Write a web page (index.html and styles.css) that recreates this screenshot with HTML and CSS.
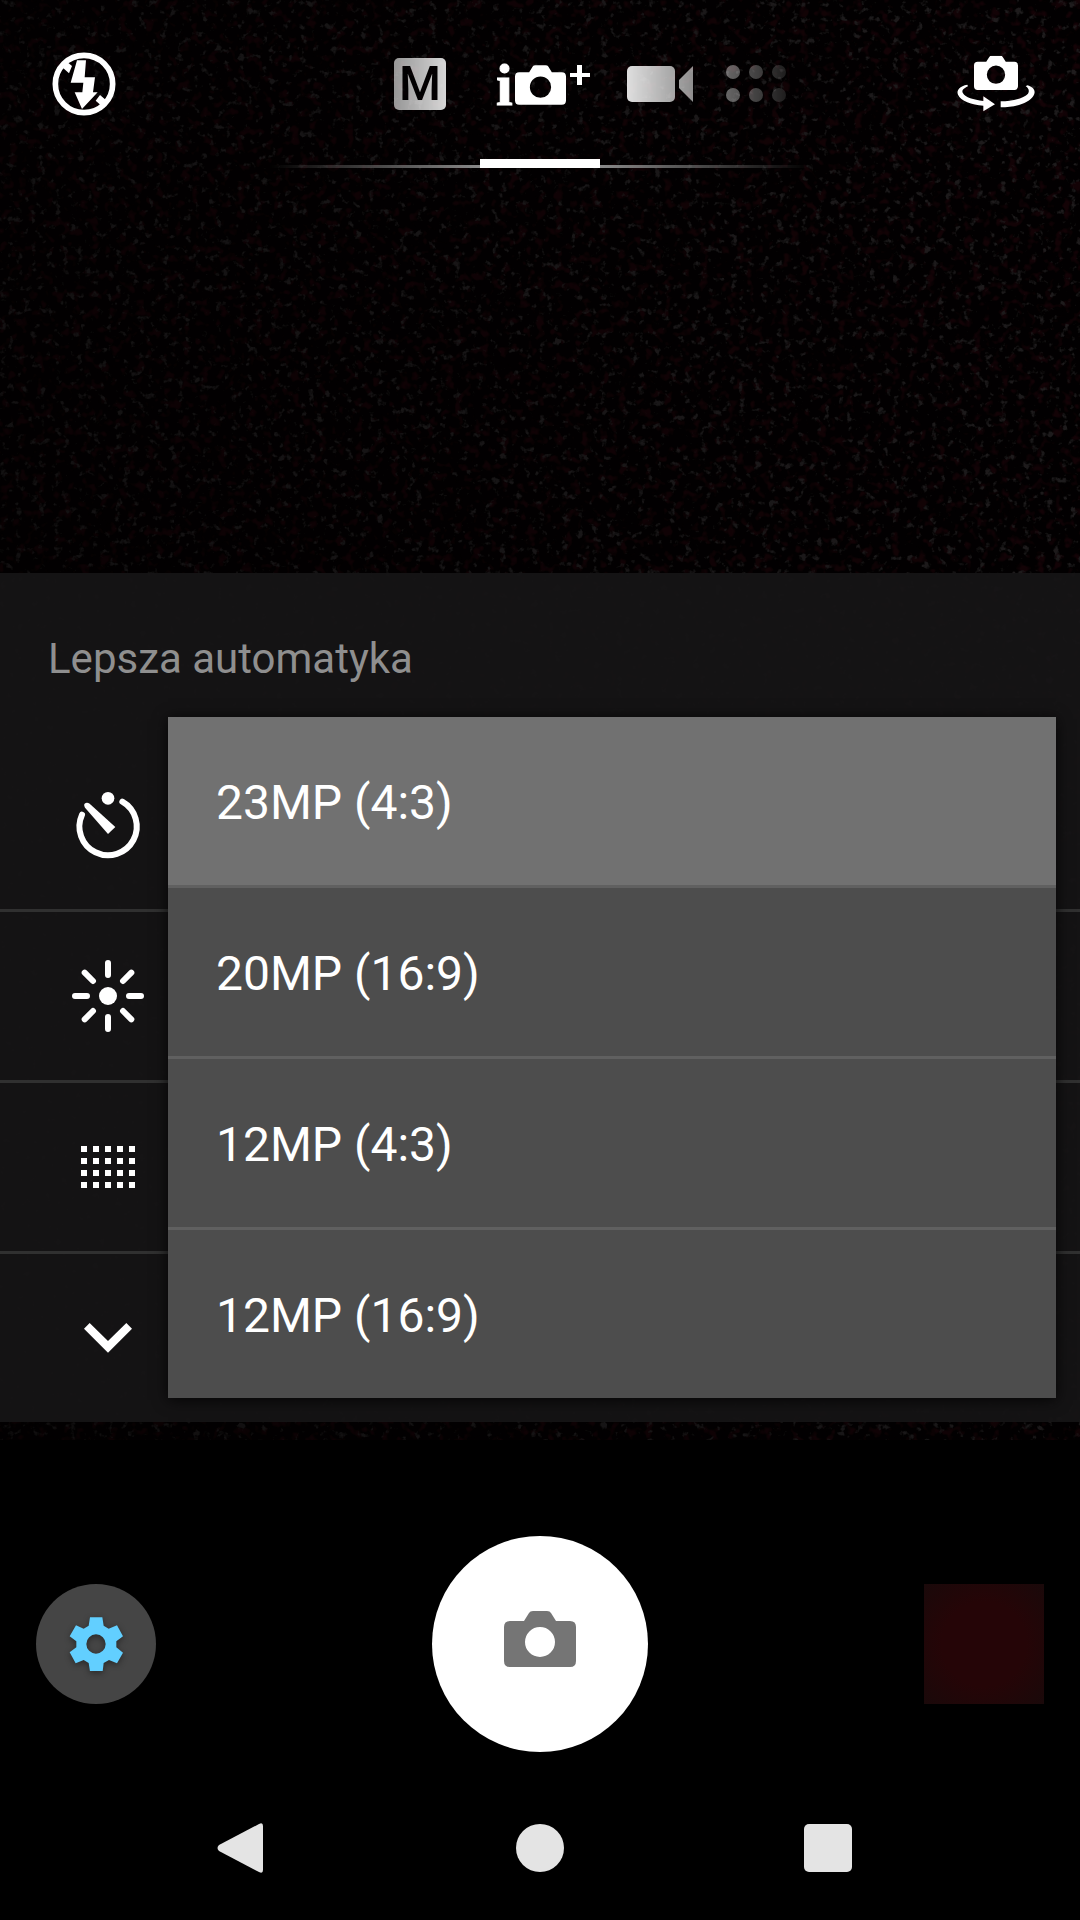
FILE: index.html
```html
<!DOCTYPE html>
<html lang="pl">
<head>
<meta charset="utf-8">
<meta name="viewport" content="width=device-width, initial-scale=1">
<title>Aparat</title>
<link rel="stylesheet" href="styles.css">
</head>
<body>
<svg class="defs" aria-hidden="true">
	<symbol id="camera" viewBox="0 0 72 56">
		<path fill-rule="evenodd" d="M6 10H20L25 2Q26 0 29 0H43Q46 0 47 2L52 10H66Q72 10 72 16V50Q72 56 66 56H6Q0 56 0 50V16Q0 10 6 10ZM36 16A15 15 0 1 0 36 46A15 15 0 1 0 36 16Z"/>
	</symbol>
</svg>

<main class="viewfinder">
	<!-- sensor grain -->
	<svg class="grain" aria-hidden="true">
		<filter id="grain" x="0" y="0" width="100%" height="100%" color-interpolation-filters="sRGB">
			<feTurbulence type="fractalNoise" baseFrequency="0.13" numOctaves="3" seed="8"/>
			<feColorMatrix values="0 0 0 0 0.12  0 0 0 0 0.11  0 0 0 0 0.115  6 0 0 0 -3.7"/>
		</filter>
		<filter id="grain-red" x="0" y="0" width="100%" height="100%" color-interpolation-filters="sRGB">
			<feTurbulence type="fractalNoise" baseFrequency="0.11" numOctaves="2" seed="21"/>
			<feColorMatrix values="0 0 0 0 0.08  0 0 0 0 0.01  0 0 0 0 0.025  0 5 0 0 -2.7"/>
		</filter>
		<rect width="100%" height="100%" filter="url(#grain-red)"/>
		<rect width="100%" height="100%" filter="url(#grain)"/>
	</svg>

	<header class="topbar">
		<button class="icon-btn" type="button" aria-label="Lampa wyłączona">
			<svg class="icon" viewBox="54 54 216 216">
				<circle cx="162" cy="162" r="86" fill="none" stroke="currentColor" stroke-width="17"/>
				<path d="M141 91H168L164 142H195L189 187H203L156 237L134 187H157L160 158H122Z"/>
				<path d="M90 106L104 90L126 108L117 130ZM210 195L232 214L222 234L197 212Z"/>
			</svg>
		</button>

		<nav class="modes">
			<button class="mode" type="button" aria-label="Tryb ręczny"><span class="badge">M</span></button>
			<button class="mode active" type="button" aria-label="Lepsza automatyka">
				<svg class="mode-icon" viewBox="0 0 120 72">
					<text class="serif" x="16" y="57">i</text>
					<use href="#camera" x="35" y="17" width="51" height="40"/>
					<path d="M97 17H102V25H110V29H102V37H97V29H90V25H97Z"/>
				</svg>
			</button>
			<button class="mode" type="button" aria-label="Wideo">
				<svg class="mode-icon" viewBox="0 0 120 72">
					<rect x="27" y="18" width="48" height="36" rx="5"/>
					<path d="M79 32L93 18V54L79 40Z"/>
				</svg>
			</button>
			<button class="mode" type="button" aria-label="Więcej trybów">
				<svg class="mode-icon" viewBox="0 0 120 72">
					<circle cx="13" cy="24" r="7"/><circle cx="36" cy="24" r="7"/><circle cx="59" cy="24" r="7"/>
					<circle cx="13" cy="47" r="7"/><circle cx="36" cy="47" r="7"/><circle cx="59" cy="47" r="7"/>
				</svg>
			</button>
		</nav>

		<button class="icon-btn" type="button" aria-label="Przełącz aparat">
			<svg class="icon wide" viewBox="42 24 252 216">
				<use href="#camera" x="102" y="47" width="132" height="103"/>
				<path d="M82 134C60 138 48 150 54 164C62 184 95 193 130 197V214L165 193L130 169V183C100 180 76 172 69 160C64 151 70 146 84 139Z"/>
				<path d="M182 184C215 184 252 175 264 161C270 151 264 143 257 139L262 136C282 141 289 155 280 168C268 189 225 202 182 202Z"/>
			</svg>
		</button>
	</header>

	<section class="panel">
		<h1 class="panel-title">Lepsza automatyka</h1>
		<ul class="settings">
			<li>
				<button class="setting" type="button" aria-label="Samowyzwalacz">
					<svg class="icon" viewBox="66 57 216 216">
						<path d="M217 95A86 86 0 1 1 96 134" fill="none" stroke="currentColor" stroke-width="18" stroke-linecap="round"/>
						<circle cx="174" cy="85" r="19"/>
						<path d="M105 113Q99 103 107 99Q113 97 119 101L196 171L174 192Z"/>
					</svg>
				</button>
			</li>
			<li>
				<button class="setting" type="button" aria-label="Jasność">
					<svg class="icon" viewBox="66 570 216 216">
						<circle cx="174" cy="678" r="27"/>
						<path d="M174 579V615M174 741V777M75 678H111M237 678H273M104 608L129 633M219 723L244 748M244 608L219 633M129 723L104 748" fill="none" stroke="currentColor" stroke-width="18" stroke-linecap="round"/>
					</svg>
				</button>
			</li>
			<li>
				<button class="setting" type="button" aria-label="Rozdzielczość">
					<svg class="icon" viewBox="0 0 72 72">
						<path d="M9 18H63M9 30H63M9 42H63M9 54H63" fill="none" stroke="currentColor" stroke-width="6" stroke-dasharray="6 6"/>
					</svg>
				</button>
			</li>
			<li>
				<button class="setting" type="button" aria-label="Więcej">
					<svg class="icon" viewBox="66 576 216 216">
						<path d="M102 656L119 639L174 693L229 639L246 656L174 728Z"/>
					</svg>
				</button>
			</li>
		</ul>

		<ul class="popup">
			<li><button class="option selected" type="button">23MP (4:3)</button></li>
			<li><button class="option" type="button">20MP (16:9)</button></li>
			<li><button class="option" type="button">12MP (4:3)</button></li>
			<li><button class="option" type="button">12MP (16:9)</button></li>
		</ul>
	</section>
</main>

<footer class="controls">
	<button class="settings-btn" type="button" aria-label="Ustawienia">
		<svg class="gear" viewBox="146 170 162 162">
			<path fill-rule="evenodd" d="M209 171H246L250 196L265 205L290 195L308 228L288 243V261L308 277L290 309L266 299L250 308L247 333H209L205 308L190 299L166 309L148 276L168 261V243L148 228L167 195L190 205L205 196ZM227 222A29 29 0 1 0 227 280A29 29 0 1 0 227 222Z"/>
		</svg>
	</button>
	<button class="shutter" type="button" aria-label="Zrób zdjęcie">
		<svg class="shutter-icon"><use href="#camera"/></svg>
	</button>
	<button class="thumb" type="button" aria-label="Ostatnie zdjęcie"></button>
</footer>

<nav class="navbar">
	<button type="button" aria-label="Wstecz">
		<svg viewBox="0 0 72 72"><path d="M3 33L43 12Q47 10 47 14V58Q47 62 43 60L3 39Q0 36 3 33Z"/></svg>
	</button>
	<button type="button" aria-label="Ekran główny">
		<svg viewBox="0 0 72 72"><circle cx="36" cy="36" r="24"/></svg>
	</button>
	<button type="button" aria-label="Ostatnie">
		<svg viewBox="0 0 72 72"><rect x="12" y="12" width="48" height="48" rx="5"/></svg>
	</button>
</nav>
</body>
</html>
```
FILE: styles.css
```css
*{margin:0;padding:0;box-sizing:border-box;}
ul,li{list-style:none;}
body{min-height:100vh;display:flex;flex-direction:column;background:#000;color:#fff;font-family:Roboto,"Noto Sans",sans-serif;}
button{border:0;background:none;color:inherit;font:inherit;cursor:pointer;}
svg{display:block;fill:currentColor;}
.defs{position:absolute;width:0;height:0;}

/* viewfinder */
.viewfinder{flex:1;display:flex;flex-direction:column;justify-content:space-between;padding-bottom:18px;position:relative;background:#020001;}
.grain{position:absolute;top:0;left:0;width:100%;height:100%;-webkit-mask-image:linear-gradient(75deg,rgba(0,0,0,.5),#000);mask-image:linear-gradient(75deg,rgba(0,0,0,.5),#000);}
.icon{width:72px;height:72px;}
.icon.wide{width:84px;}

.topbar{position:relative;display:grid;grid-template-columns:1fr auto 1fr;padding:0 42px;}
.icon-btn{align-self:start;justify-self:start;padding:48px 0 0 6px;}
.icon-btn:last-child{justify-self:end;}
.modes{display:grid;grid-template-columns:repeat(5,1fr);width:600px;height:168px;background:linear-gradient(#8a8a8a,#8a8a8a) bottom/100% 3px no-repeat;-webkit-mask-image:linear-gradient(90deg,transparent 5%,#000 40%,#000 60%,transparent 95%);mask-image:linear-gradient(90deg,transparent 5%,#000 40%,#000 60%,transparent 95%);}
.mode{display:flex;flex-direction:column;align-items:center;padding-top:48px;}
.mode:first-child{grid-column:2;padding-top:58px;}
.mode.active{border-bottom:9px solid #fff;}
.mode-icon{width:120px;height:72px;}
.badge{width:52px;height:52px;border-radius:5px;background:#fff;color:#020001;font-size:48px;font-weight:500;line-height:52px;text-align:center;}
.serif{font:bold 60px "Liberation Serif",serif;stroke:currentColor;stroke-width:1;}

/* settings panel */
.panel{position:relative;background:rgba(21,20,21,.93);}
.panel-title{padding:4px 48px 0;color:#8f8f8f;font-size:42px;font-weight:400;line-height:164px;}
.settings li+li{border-top:3px solid #303030;}
.setting{display:block;width:100%;height:168px;padding:48px 72px;}
.popup{position:absolute;top:144px;right:24px;bottom:24px;left:168px;background:#4d4d4d;box-shadow:0 2px 14px rgba(0,0,0,.8);}
.popup li+li{border-top:3px solid #606060;}
.option{display:block;width:100%;height:168px;padding:2px 48px 0;font-size:48px;text-align:left;}
.option.selected{background:#717171;}

/* bottom controls */
.controls{display:grid;grid-template-columns:1fr auto 1fr;align-items:center;padding:96px 36px 24px;}
.settings-btn{display:flex;align-items:center;justify-content:center;width:120px;height:120px;border-radius:50%;background:#454545;color:#62cfff;}
.gear{width:54px;height:54px;filter:drop-shadow(0 2px 3px rgba(0,0,0,.4));}
.shutter{display:flex;align-items:center;justify-content:center;width:216px;height:216px;padding-bottom:10px;border-radius:50%;background:#fff;color:#757575;}
.shutter-icon{width:72px;height:56px;}
.thumb{justify-self:end;width:120px;height:120px;background:radial-gradient(#250507 50%,#1a090a);}

.navbar{display:flex;justify-content:center;gap:216px;padding:36px 0;color:#e4e4e4;}
.navbar svg{width:72px;height:72px;}
```
